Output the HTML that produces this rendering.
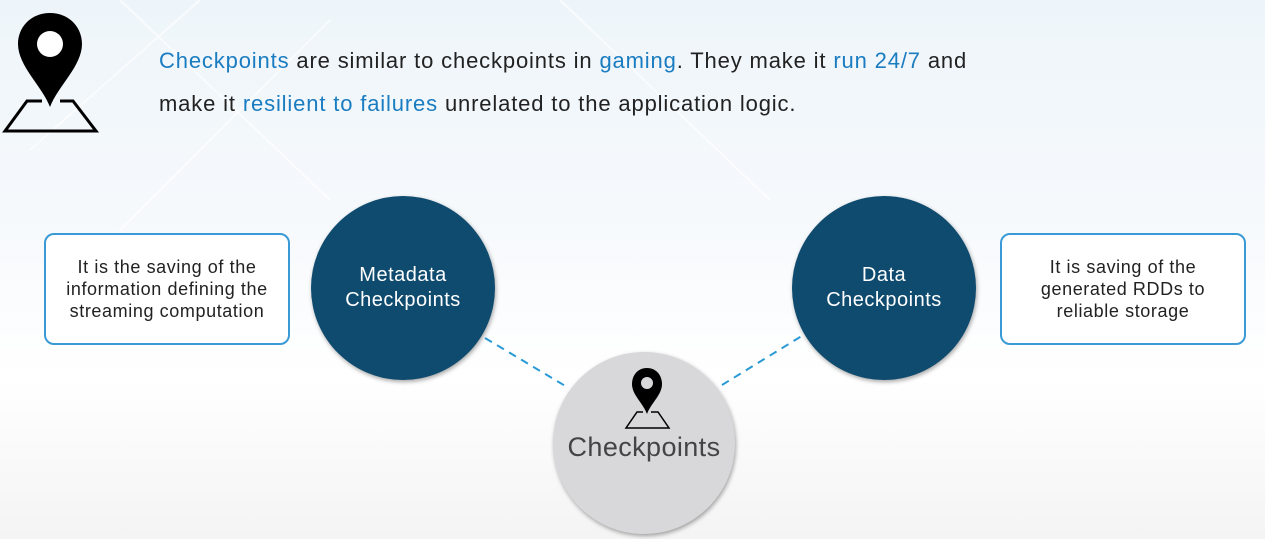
<!DOCTYPE html>
<html><head><meta charset="utf-8"><style>
body{margin:0;width:1265px;height:539px;overflow:hidden;font-family:"Liberation Sans","DejaVu Sans",sans-serif;position:relative;
background:linear-gradient(180deg,#eef5fa 0%,#f6f9fc 40%,#ffffff 70%,#f4f4f4 100%);}
.t{position:absolute;left:159px;font-size:22px;color:#222;white-space:nowrap;letter-spacing:0.85px}
.b{color:#1a7cc1}
.box{position:absolute;width:246px;height:112px;border:2px solid #3a9ad6;border-radius:10px;background:#fff;box-sizing:border-box;
display:flex;align-items:center;justify-content:center;text-align:center;font-size:18px;line-height:22px;color:#222;letter-spacing:0.6px}
.c{position:absolute;border-radius:50%;display:flex;align-items:center;justify-content:center;text-align:center;
background:#0f4b6e;color:#fff;font-size:20px;line-height:25px;letter-spacing:0.5px;box-shadow:1px 2px 4px rgba(0,0,0,.35)}
</style></head><body>
<svg style="position:absolute;left:0;top:0" width="1265" height="539">
<g stroke="#fff" stroke-width="2" fill="none" opacity=".6">
<path d="M120 0 L330 200 M330 20 L120 230 M560 0 L770 200 M30 150 L200 0"/>
</g>
<path d="M50 13 C31 13 18 27 18 44 C18 66 42 86 50 107 C58 86 82 66 82 44 C82 27 69 13 50 13Z" fill="#000"/>
<circle cx="50" cy="44" r="13" fill="#fff"/>
<path d="M42 101 H27 L5 131 H96 L73 101 H60" fill="none" stroke="#000" stroke-width="3"/>
<line x1="485" y1="338" x2="567" y2="387" stroke="#2a9ad6" stroke-width="2" stroke-dasharray="8,6"/>
<line x1="722" y1="385" x2="805" y2="334" stroke="#2a9ad6" stroke-width="2" stroke-dasharray="8,6"/>
</svg>
<div class="t" style="top:48px"><span class="b">Checkpoints</span> are similar to checkpoints in <span class="b">gaming</span>. They make it <span class="b">run 24/7</span> and</div>
<div class="t" style="top:91px">make it <span class="b">resilient to failures</span> unrelated to the application logic.</div>
<div class="box" style="left:44px;top:233px">It is the saving of the<br>information defining the<br>streaming computation</div>
<div class="box" style="left:1000px;top:233px">It is saving of the<br>generated RDDs to<br>reliable storage</div>
<div class="c" style="left:311px;top:196px;width:184px;height:184px">Metadata<br>Checkpoints</div>
<div class="c" style="left:792px;top:196px;width:184px;height:184px">Data<br>Checkpoints</div>
<div class="c" style="left:553px;top:352px;width:182px;height:182px;background:#d8d8da;color:#444;font-size:27px;letter-spacing:0.4px;display:block">
<svg style="position:absolute;left:70px;top:14px" width="50" height="66">
<path d="M24 2 C15 2 9 9 9 18 C9 29 20 37 24 48 C28 37 39 29 39 18 C39 9 33 2 24 2Z" fill="#000"/>
<circle cx="24" cy="17" r="6" fill="#d8d8da"/>
<path d="M20 46 H14 L3 62 H46 L35 46 H28" fill="none" stroke="#000" stroke-width="1.5"/>
</svg>
<div style="position:absolute;top:83px;width:100%;text-align:center">Checkpoints</div>
</div>
</body></html>
